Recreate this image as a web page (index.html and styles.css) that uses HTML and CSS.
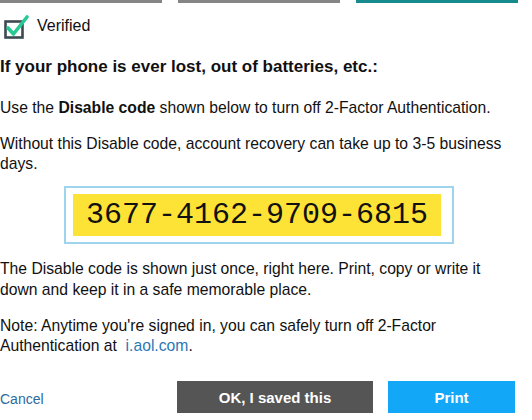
FILE: index.html
```html
<!DOCTYPE html>
<html>
<head>
<meta charset="utf-8">
<link rel="stylesheet" href="styles.css">
</head>
<body>
<div class="page">
  <div class="steps">
    <div class="step done"></div>
    <div class="step done"></div>
    <div class="step active"></div>
  </div>
  <div class="verified">
    <svg class="check" width="26" height="26" viewBox="0 0 26 26">
      <rect x="1.5" y="8.5" width="17" height="16" fill="#fff" stroke="#3d4a52" stroke-width="2.6"/>
      <path d="M4 15 L9.5 21 L23 4" fill="none" stroke="#27c994" stroke-width="3.6" stroke-linecap="round" stroke-linejoin="round"/>
    </svg>
    <span>Verified</span>
  </div>
  <h2 class="heading">If your phone is ever lost, out of batteries, etc.:</h2>
  <p class="text first">Use the <b>Disable code</b> shown below to turn off 2-Factor Authentication.</p>
  <p class="text">Without this Disable code, account recovery can take up to 3-5 business days.</p>
  <div class="code-wrap">
    <div class="code-box"><span class="code">3677-4162-9709-6815</span></div>
  </div>
  <p class="text after-code">The Disable code is shown just once, right here. Print, copy or write it down and keep it in a safe memorable place.</p>
  <p class="text note">Note: Anytime you're signed in, you can safely turn off 2-Factor Authentication at&nbsp; <a class="link" href="#">i.aol.com</a>.</p>
  <div class="actions">
    <a class="cancel" href="#">Cancel</a>
    <button class="btn btn-ok">OK, I saved this</button>
    <button class="btn btn-print">Print</button>
  </div>
</div>
</body>
</html>
```
FILE: styles.css
```css
html, body {
  margin: 0;
  padding: 0;
  background: #fff;
}
body {
  font-family: "Liberation Sans", Arial, sans-serif;
  color: #111;
  width: 532px;
  height: 420px;
  overflow: hidden;
}
.page {
  width: 518px;
}
.steps {
  display: flex;
  gap: 16px;
}
.step {
  width: 162px;
  height: 3px;
  background: #858585;
}
.step.active {
  background: #168a8d;
}
.verified {
  display: flex;
  align-items: center;
  gap: 7px;
  height: 26px;
  margin-top: 10px;
  padding-left: 4px;
  font-size: 16px;
}
.check {
  display: block;
}
.heading {
  margin: 18px 0 0;
  font-size: 17px;
  font-weight: bold;
  line-height: 20px;
}
.text {
  width: 505px;
  margin: 16px 0 0;
  font-size: 15.7px;
  line-height: 20px;
}
.text.first {
  margin-top: 21px;
}
.text b {
  font-weight: bold;
}
.code-wrap {
  display: flex;
  justify-content: center;
  margin-top: 12px;
}
.code-box {
  border: 2px solid #9fd4ef;
  padding: 6px 11px 6px 7px;
}
.code {
  display: block;
  background: #fde335;
  font-family: "Liberation Mono", "Courier New", monospace;
  font-size: 30px;
  line-height: 42px;
  padding: 0 13px;
  color: #111;
}
.text.after-code {
  margin-top: 14px;
  line-height: 21px;
}
.text.note {
  margin-top: 16px;
}
.link {
  color: #2a78b8;
  text-decoration: none;
}
.actions {
  display: flex;
  align-items: center;
  margin-top: 25px;
}
.cancel {
  color: #2d6aa0;
  text-decoration: none;
  font-size: 14px;
  margin-top: 4px;
  width: 177px;
}
.btn {
  border: none;
  height: 32px;
  font-family: "Liberation Sans", Arial, sans-serif;
  font-size: 15px;
  font-weight: bold;
  color: #fff;
  padding: 0;
}
.btn-ok {
  width: 196px;
  background: #555555;
}
.btn-print {
  width: 127px;
  margin-left: 15px;
  background: #12a7f7;
}
```
